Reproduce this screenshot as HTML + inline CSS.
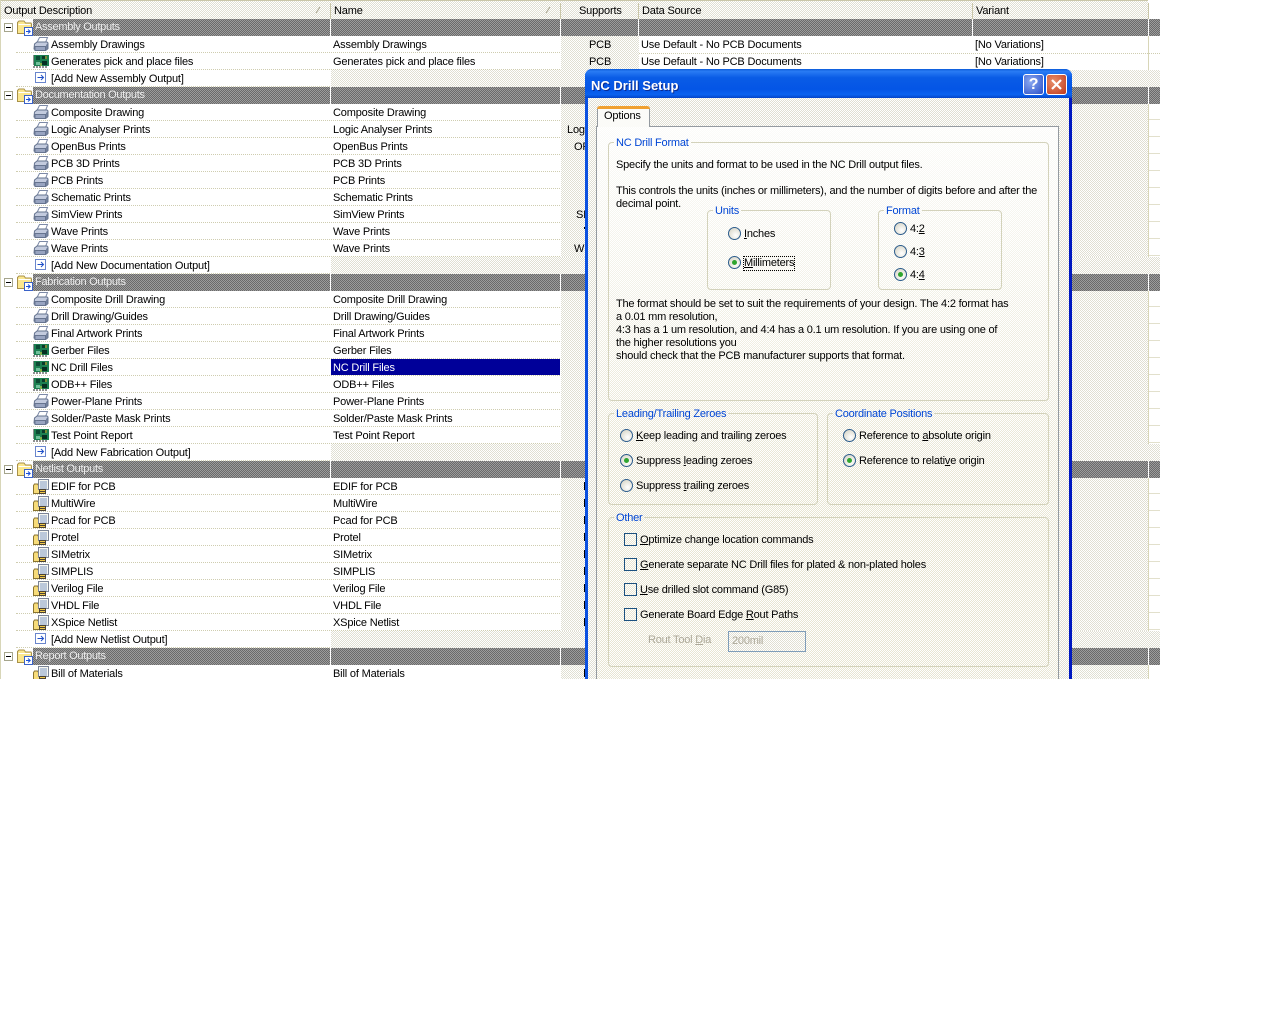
<!DOCTYPE html>
<html><head><meta charset="utf-8"><title>NC Drill Setup</title>
<style>
html,body{margin:0;padding:0;background:#fff}
body{width:1280px;height:1024px;overflow:hidden;position:relative;font:11px/13px "Liberation Sans",sans-serif;color:#000;letter-spacing:-.17px}
#w{position:absolute;left:0;top:0;width:1280px;height:679px;overflow:hidden}
.a{position:absolute}
.d{position:absolute;background:conic-gradient(#e0dfd2 25%,#fff 0 50%,#e0dfd2 0 75%,#fff 0) 0 0/2px 2px}
.h{position:absolute;top:3px;width:1px;height:16px;background:#c9c6a8}
.t{position:absolute;white-space:nowrap;font:11px/13px "Liberation Sans",sans-serif;color:#000;margin-top:2px}
.k{letter-spacing:-.21px}
.g{position:absolute;left:33px;width:1127px;height:17px;background:conic-gradient(#6a6a6a 25%,#9c9c9c 0 50%,#6a6a6a 0 75%,#9c9c9c 0) 0 0/2px 2px;color:#eee}
.g span{position:absolute;left:2px;top:2px;white-space:nowrap;letter-spacing:-.28px}
.g s{position:absolute;top:0;width:1px;height:17px;background:#fff}
.r{position:absolute;left:16px;width:544px;height:16px;border-bottom:1px dotted #cfcdb0}
.r b,.r i{position:absolute;top:3px;font-weight:normal;font-style:normal;white-space:nowrap}
.r b{left:35px}.r i{left:317px}
.r svg{position:absolute;left:17px;top:0;width:16px;height:16px}
.m{position:absolute;left:4px;width:9px;height:9px}
.f{position:absolute;left:17px;width:16px;height:16px}
.ad{position:absolute;left:331px;width:829px;height:17px;background:conic-gradient(#e0dfd2 25%,#fff 0 50%,#e0dfd2 0 75%,#fff 0) 0 0/2px 2px}
fieldset{position:absolute;box-sizing:border-box;margin:0;padding:0;border:1px solid #d3d2bb;border-radius:4px;min-width:0}
legend{margin-left:5px;padding:0 2px;font:11px/13px "Liberation Sans",sans-serif;color:#0046d5;position:relative;top:1px;letter-spacing:-.21px}
.o,.c{position:absolute;width:13px;height:13px}
</style></head><body>
<svg width="0" height="0" style="position:absolute">
<defs>
<radialGradient id="rg" cx=".6" cy=".65" r=".7"><stop offset="0" stop-color="#fff"/><stop offset="1" stop-color="#d8d6c8"/></radialGradient>
<symbol id="mn" viewBox="0 0 9 9"><rect x=".5" y=".5" width="8" height="8" fill="#fff" stroke="#a5a58c"/><path d="M2 4.500h5" stroke="#000"/></symbol>
<symbol id="fo" viewBox="0 0 16 16"><path d="M.5 13.500V2.500L2 1h5l1.500 2H14l.5 1v9.500z" fill="#fbe78e" stroke="#a8914a"/><path d="M1.500 4.500h12" stroke="#fff"/><rect x="7.500" y="7.500" width="8" height="8" fill="#fff" stroke="#3a62c8"/><path d="M9 11.500h4M11 9.500l2.200 2-2.200 2" stroke="#1a50d8" fill="none"/></symbol>
<symbol id="pr" viewBox="0 0 16 16"><path d="M4 6.500L6.500 1.500h8L12.500 6.500z" fill="#fff" stroke="#7d8aa6"/><path d="M1.500 8l2.500-2h10l1 1v5.500l-1.500 1.500H2.500L1 13z" fill="#c3cbde" stroke="#66748f"/><path d="M2 10.500h10.500v4H2z" fill="#98a4c0" stroke="#66748f"/><path d="M13 9l1.500-1.500v5L13 14z" fill="#74829e"/></symbol>
<symbol id="ch" viewBox="0 0 16 16"><g transform="translate(0 1)"><rect x="1" y="1" width="15" height="11" fill="#1c7f50"/><path d="M0 2h1M0 4h1M0 6h1M0 8h1M0 10h1M1 12v2M4 12v2M7 12v2M10 12v2M13 12v2" stroke="#222"/><rect x="3" y="2" width="4" height="4" fill="#0d4a34"/><rect x="9" y="2" width="5" height="3" fill="#0a3a2a"/><rect x="3" y="8" width="4" height="3" fill="#6fc09a"/><rect x="9" y="7" width="5" height="4" fill="#063022"/><path d="M13 2v3M8 12V9" stroke="#e8e040"/></g></symbol>
<symbol id="nt" viewBox="0 0 16 16"><path d="M.5 15.500V7.500l1-1.500h3l1 1.500h5v8z" fill="#f7dc7a" stroke="#8a7430"/><rect x="5.500" y="1.500" width="10" height="10" fill="#f7f7f0" stroke="#7b8496"/><path d="M7 4h7M7 6h7M7 8h7M7 10h7" stroke="#7f9ac4"/><rect x="6" y="11" width="7" height="5" fill="#4a4234"/><path d="M7 12.500h5M7 14.500h5" stroke="#f0c848"/></symbol>
<symbol id="ab" viewBox="0 0 11 11"><rect x=".5" y=".5" width="10" height="10" fill="#fff" stroke="#6a86cc"/><path d="M2.500 5.500h6M6 3l2.500 2.500L6 8" stroke="#2050c8" fill="none"/></symbol>
<symbol id="r0" viewBox="0 0 13 13"><circle cx="6.500" cy="6.500" r="6" fill="url(#rg)" stroke="#2c5c8c"/></symbol>
<symbol id="r1" viewBox="0 0 13 13"><circle cx="6.500" cy="6.500" r="6" fill="url(#rg)" stroke="#2c5c8c"/><circle cx="6.500" cy="6.500" r="2.500" fill="#2fa52f"/></symbol>
</defs></svg>
<div id="w">
<!-- backgrounds -->
<div class="d" style="left:0;top:0;width:1148px;height:19px"></div>
<div class="a" style="left:0;top:0;width:1148px;height:1px;background:#c9c6a8"></div>
<div class="a" style="left:0;top:0;width:1px;height:679px;background:#d8d6b8"></div>
<div class="d" style="left:561px;top:36px;width:78px;height:643px"></div>
<div class="d" style="left:639px;top:70px;width:509px;height:609px"></div>
<div class="a" style="left:639px;top:52px;width:521px;height:1px;border-bottom:1px dotted #cfcdb0"></div>
<div class="a" style="left:1148px;top:36px;width:1px;height:643px;background:#d8d6b8"></div>
<div class="a" style="left:1149px;top:103px;width:11px;height:576px;background:repeating-linear-gradient(#0000 0 16px,#e2e0cc 16px 17px)"></div>
<div class="ad" style="top:70px"></div><div class="ad" style="top:257px"></div><div class="ad" style="top:444px"></div><div class="ad" style="top:631px"></div>
<!-- header -->
<div class="h" style="left:330px"></div><div class="h" style="left:560px"></div><div class="h" style="left:638px"></div><div class="h" style="left:972px"></div><div class="h" style="left:1148px"></div>
<div class="t" style="left:4px;top:3px">Output Description</div>
<div class="t" style="left:334px;top:3px">Name</div>
<div class="t" style="left:579px;top:3px">Supports</div>
<div class="t" style="left:642px;top:3px">Data Source</div>
<div class="t" style="left:976px;top:3px">Variant</div>
<svg class="a" style="left:315px;top:6px" width="7" height="8"><path d="M1 7L5 1" stroke="#a5a28c" fill="none"/></svg>
<svg class="a" style="left:545px;top:6px" width="7" height="8"><path d="M1 7L5 1" stroke="#a5a28c" fill="none"/></svg>
<!-- group rows -->
<div class="g" style="top:19px"><span>Assembly Outputs</span><s style="left:297px"></s><s style="left:527px"></s><s style="left:605px"></s><s style="left:939px"></s><s style="left:1115px"></s></div>
<div class="g" style="top:87px"><span>Documentation Outputs</span><s style="left:297px"></s><s style="left:527px"></s><s style="left:605px"></s><s style="left:939px"></s><s style="left:1115px"></s></div>
<div class="g" style="top:274px"><span>Fabrication Outputs</span><s style="left:297px"></s><s style="left:527px"></s><s style="left:605px"></s><s style="left:939px"></s><s style="left:1115px"></s></div>
<div class="g" style="top:461px"><span>Netlist Outputs</span><s style="left:297px"></s><s style="left:527px"></s><s style="left:605px"></s><s style="left:939px"></s><s style="left:1115px"></s></div>
<div class="g" style="top:648px"><span>Report Outputs</span><s style="left:297px"></s><s style="left:527px"></s><s style="left:605px"></s><s style="left:939px"></s><s style="left:1115px"></s></div>
<svg class="m" style="top:23px"><use href="#mn"/></svg><svg class="f" style="top:20px"><use href="#fo"/></svg>
<svg class="m" style="top:91px"><use href="#mn"/></svg><svg class="f" style="top:88px"><use href="#fo"/></svg>
<svg class="m" style="top:278px"><use href="#mn"/></svg><svg class="f" style="top:275px"><use href="#fo"/></svg>
<svg class="m" style="top:465px"><use href="#mn"/></svg><svg class="f" style="top:462px"><use href="#fo"/></svg>
<svg class="m" style="top:652px"><use href="#mn"/></svg><svg class="f" style="top:649px"><use href="#fo"/></svg>
<!-- selected -->
<div class="a" style="left:331px;top:359px;width:229px;height:16px;background:#000099"></div>
<!-- rows -->
<div class="r" style="top:36px"><svg><use href="#pr"/></svg><b>Assembly Drawings</b><i>Assembly Drawings</i></div>
<div class="r" style="top:53px"><svg><use href="#ch"/></svg><b>Generates pick and place files</b><i>Generates pick and place files</i></div>
<div class="r" style="top:70px;width:314px"><svg style="left:19px;top:2px;width:11px;height:11px"><use href="#ab"/></svg><b>[Add New Assembly Output]</b></div>
<div class="r" style="top:104px"><svg><use href="#pr"/></svg><b>Composite Drawing</b><i>Composite Drawing</i></div>
<div class="r" style="top:121px"><svg><use href="#pr"/></svg><b>Logic Analyser Prints</b><i>Logic Analyser Prints</i></div>
<div class="r" style="top:138px"><svg><use href="#pr"/></svg><b>OpenBus Prints</b><i>OpenBus Prints</i></div>
<div class="r" style="top:155px"><svg><use href="#pr"/></svg><b>PCB 3D Prints</b><i>PCB 3D Prints</i></div>
<div class="r" style="top:172px"><svg><use href="#pr"/></svg><b>PCB Prints</b><i>PCB Prints</i></div>
<div class="r" style="top:189px"><svg><use href="#pr"/></svg><b>Schematic Prints</b><i>Schematic Prints</i></div>
<div class="r" style="top:206px"><svg><use href="#pr"/></svg><b>SimView Prints</b><i>SimView Prints</i></div>
<div class="r" style="top:223px"><svg><use href="#pr"/></svg><b>Wave Prints</b><i>Wave Prints</i></div>
<div class="r" style="top:240px"><svg><use href="#pr"/></svg><b>Wave Prints</b><i>Wave Prints</i></div>
<div class="r" style="top:257px;width:314px"><svg style="left:19px;top:2px;width:11px;height:11px"><use href="#ab"/></svg><b>[Add New Documentation Output]</b></div>
<div class="r" style="top:291px"><svg><use href="#pr"/></svg><b>Composite Drill Drawing</b><i>Composite Drill Drawing</i></div>
<div class="r" style="top:308px"><svg><use href="#pr"/></svg><b>Drill Drawing/Guides</b><i>Drill Drawing/Guides</i></div>
<div class="r" style="top:325px"><svg><use href="#pr"/></svg><b>Final Artwork Prints</b><i>Final Artwork Prints</i></div>
<div class="r" style="top:342px"><svg><use href="#ch"/></svg><b>Gerber Files</b><i>Gerber Files</i></div>
<div class="r" style="top:359px"><svg><use href="#ch"/></svg><b>NC Drill Files</b><i style="color:#fff">NC Drill Files</i></div>
<div class="r" style="top:376px"><svg><use href="#ch"/></svg><b>ODB++ Files</b><i>ODB++ Files</i></div>
<div class="r" style="top:393px"><svg><use href="#pr"/></svg><b>Power-Plane Prints</b><i>Power-Plane Prints</i></div>
<div class="r" style="top:410px"><svg><use href="#pr"/></svg><b>Solder/Paste Mask Prints</b><i>Solder/Paste Mask Prints</i></div>
<div class="r" style="top:427px"><svg><use href="#ch"/></svg><b>Test Point Report</b><i>Test Point Report</i></div>
<div class="r" style="top:444px;width:314px"><svg style="left:19px;top:2px;width:11px;height:11px"><use href="#ab"/></svg><b>[Add New Fabrication Output]</b></div>
<div class="r" style="top:478px"><svg><use href="#nt"/></svg><b>EDIF for PCB</b><i>EDIF for PCB</i></div>
<div class="r" style="top:495px"><svg><use href="#nt"/></svg><b>MultiWire</b><i>MultiWire</i></div>
<div class="r" style="top:512px"><svg><use href="#nt"/></svg><b>Pcad for PCB</b><i>Pcad for PCB</i></div>
<div class="r" style="top:529px"><svg><use href="#nt"/></svg><b>Protel</b><i>Protel</i></div>
<div class="r" style="top:546px"><svg><use href="#nt"/></svg><b>SIMetrix</b><i>SIMetrix</i></div>
<div class="r" style="top:563px"><svg><use href="#nt"/></svg><b>SIMPLIS</b><i>SIMPLIS</i></div>
<div class="r" style="top:580px"><svg><use href="#nt"/></svg><b>Verilog File</b><i>Verilog File</i></div>
<div class="r" style="top:597px"><svg><use href="#nt"/></svg><b>VHDL File</b><i>VHDL File</i></div>
<div class="r" style="top:614px"><svg><use href="#nt"/></svg><b>XSpice Netlist</b><i>XSpice Netlist</i></div>
<div class="r" style="top:631px;width:314px"><svg style="left:19px;top:2px;width:11px;height:11px"><use href="#ab"/></svg><b>[Add New Netlist Output]</b></div>
<div class="r" style="top:665px"><svg><use href="#nt"/></svg><b>Bill of Materials</b><i>Bill of Materials</i></div>
<!-- other columns -->
<div class="t" style="left:589px;top:37px">PCB</div><div class="t" style="left:589px;top:54px">PCB</div>
<div class="t" style="left:641px;top:37px">Use Default - No PCB Documents</div><div class="t" style="left:641px;top:54px">Use Default - No PCB Documents</div>
<div class="t" style="left:975px;top:37px">[No Variations]</div><div class="t" style="left:975px;top:54px">[No Variations]</div>
<div class="t" style="left:567px;top:122px">Log</div><div class="t" style="left:574px;top:139px">OF</div><div class="t" style="left:576px;top:207px">SI</div><div class="t" style="left:574px;top:241px">W</div>
<div class="a" style="left:584px;top:227px;width:1px;height:2px;background:#000"></div>
<div class="a" style="left:584px;top:482px;width:1px;height:8px;background:#000"></div><div class="a" style="left:584px;top:499px;width:1px;height:8px;background:#000"></div><div class="a" style="left:584px;top:516px;width:1px;height:8px;background:#000"></div><div class="a" style="left:584px;top:533px;width:1px;height:8px;background:#000"></div><div class="a" style="left:584px;top:550px;width:1px;height:8px;background:#000"></div><div class="a" style="left:584px;top:567px;width:1px;height:8px;background:#000"></div><div class="a" style="left:584px;top:584px;width:1px;height:8px;background:#000"></div><div class="a" style="left:584px;top:601px;width:1px;height:8px;background:#000"></div><div class="a" style="left:584px;top:618px;width:1px;height:8px;background:#000"></div><div class="a" style="left:584px;top:669px;width:1px;height:8px;background:#000"></div>
<!-- dialog -->
<div class="a" style="left:585px;top:69px;width:487px;height:640px;background:#0a50e0;border-radius:7px 7px 0 0"></div>
<div class="a" style="left:585px;top:69px;width:487px;height:29px;border-radius:7px 7px 0 0;background:linear-gradient(#0a5ad8,#2a7cf4 8%,#0a5ce6 30%,#0455e6 70%,#0a62f0 88%,#0444c8)"></div>
<div class="a" style="left:1069px;top:98px;width:3px;height:600px;background:#0018c0"></div>
<div class="d" style="left:588px;top:98px;width:481px;height:600px"></div>
<div class="t" style="left:591px;top:76px;font:bold 13px/15px 'Liberation Sans',sans-serif;color:#fff;text-shadow:1px 1px #0a2a90;letter-spacing:0">NC Drill Setup</div>
<div class="a" style="left:1023px;top:74px;width:19px;height:19px;border:1px solid #fff;border-radius:3px;background:radial-gradient(circle at 35% 35%,#8aa8f0,#2a50c8);color:#fff;font:bold 16px/19px 'Liberation Sans',sans-serif;text-align:center">?</div>
<div class="a" style="left:1046px;top:74px;width:19px;height:19px;border:1px solid #fff;border-radius:3px;background:radial-gradient(circle at 35% 35%,#e8906c,#c0381a)"><svg width="19" height="19" style="display:block"><path d="M5 5l9 9M14 5l-9 9" stroke="#fff" stroke-width="2.200"/></svg></div>
<!-- tab panel -->
<div class="a" style="left:596px;top:126px;width:461px;height:600px;border:1px solid #949aa0;background:conic-gradient(#0000 25%,#fff 0 50%,#0000 0 75%,#fff 0) 0 0/2px 2px,linear-gradient(#fbfbf8 0,#e8e5d2 60%)"></div>
<div class="a" style="left:597px;top:106px;width:53px;height:21px;background:#fbfbf8;border:solid #949aa0;border-width:0 1px;box-sizing:border-box;border-radius:3px 3px 0 0"></div>
<div class="a" style="left:597px;top:106px;width:53px;height:3px;background:#f0a030;border-radius:3px 3px 0 0"></div>
<div class="t" style="left:604px;top:108px">Options</div>
<!-- group boxes -->
<fieldset style="left:608px;top:136px;width:441px;height:265px"><legend>NC Drill Format</legend></fieldset>
<fieldset style="left:707px;top:204px;width:124px;height:86px"><legend>Units</legend></fieldset>
<fieldset style="left:878px;top:204px;width:124px;height:86px"><legend>Format</legend></fieldset>
<fieldset style="left:608px;top:407px;width:210px;height:98px"><legend>Leading/Trailing Zeroes</legend></fieldset>
<fieldset style="left:827px;top:407px;width:222px;height:98px"><legend>Coordinate Positions</legend></fieldset>
<fieldset style="left:608px;top:511px;width:441px;height:156px"><legend>Other</legend></fieldset>
<!-- dialog text -->
<div class="t k" style="left:616px;top:157px">Specify the units and format to be used in the NC Drill output files.</div>
<div class="t k" style="left:616px;top:183px">This controls the units (inches or millimeters), and the number of digits before and after the</div>
<div class="t k" style="left:616px;top:196px">decimal point.</div>
<div class="t k" style="left:616px;top:296px">The format should be set to suit the requirements of your design. The 4:2 format has</div>
<div class="t k" style="left:616px;top:309px">a 0.01 mm resolution,</div>
<div class="t k" style="left:616px;top:322px">4:3 has a 1 um resolution, and 4:4 has a 0.1 um resolution. If you are using one of</div>
<div class="t k" style="left:616px;top:335px">the higher resolutions you</div>
<div class="t k" style="left:616px;top:348px">should check that the PCB manufacturer supports that format.</div>
<!-- radios -->
<svg class="o" style="left:728px;top:227px"><use href="#r0"/></svg><div class="t k" style="left:744px;top:226px"><u>I</u>nches</div>
<svg class="o" style="left:728px;top:256px"><use href="#r1"/></svg><div class="t k" style="left:744px;top:255px;outline:1px dotted #000"><u>M</u>illimeters</div>
<svg class="o" style="left:894px;top:222px"><use href="#r0"/></svg><div class="t k" style="left:910px;top:221px">4:<u>2</u></div>
<svg class="o" style="left:894px;top:245px"><use href="#r0"/></svg><div class="t k" style="left:910px;top:244px">4:<u>3</u></div>
<svg class="o" style="left:894px;top:268px"><use href="#r1"/></svg><div class="t k" style="left:910px;top:267px">4:<u>4</u></div>
<svg class="o" style="left:620px;top:429px"><use href="#r0"/></svg><div class="t k" style="left:636px;top:428px"><u>K</u>eep leading and trailing zeroes</div>
<svg class="o" style="left:620px;top:454px"><use href="#r1"/></svg><div class="t k" style="left:636px;top:453px">Suppress <u>l</u>eading zeroes</div>
<svg class="o" style="left:620px;top:479px"><use href="#r0"/></svg><div class="t k" style="left:636px;top:478px">Suppress <u>t</u>railing zeroes</div>
<svg class="o" style="left:843px;top:429px"><use href="#r0"/></svg><div class="t k" style="left:859px;top:428px">Reference to <u>a</u>bsolute origin</div>
<svg class="o" style="left:843px;top:454px"><use href="#r1"/></svg><div class="t k" style="left:859px;top:453px">Reference to relati<u>v</u>e origin</div>
<!-- checks -->
<div class="c" style="left:624px;top:533px;box-sizing:border-box;border:1px solid #1c5180"></div><div class="t k" style="left:640px;top:532px"><u>O</u>ptimize change location commands</div>
<div class="c" style="left:624px;top:558px;box-sizing:border-box;border:1px solid #1c5180"></div><div class="t k" style="left:640px;top:557px"><u>G</u>enerate separate NC Drill files for plated &amp; non-plated holes</div>
<div class="c" style="left:624px;top:583px;box-sizing:border-box;border:1px solid #1c5180"></div><div class="t k" style="left:640px;top:582px"><u>U</u>se drilled slot command (G85)</div>
<div class="c" style="left:624px;top:608px;box-sizing:border-box;border:1px solid #1c5180"></div><div class="t k" style="left:640px;top:607px">Generate Board Edge <u>R</u>out Paths</div>
<div class="t k" style="left:648px;top:632px;color:#aca899">Rout Tool <u>D</u>ia</div>
<div class="d" style="left:728px;top:631px;width:76px;height:19px;border:1px solid #7f9db9"></div>
<div class="t k" style="left:732px;top:633px;color:#aca899">200mil</div>
</div>
</body></html>
